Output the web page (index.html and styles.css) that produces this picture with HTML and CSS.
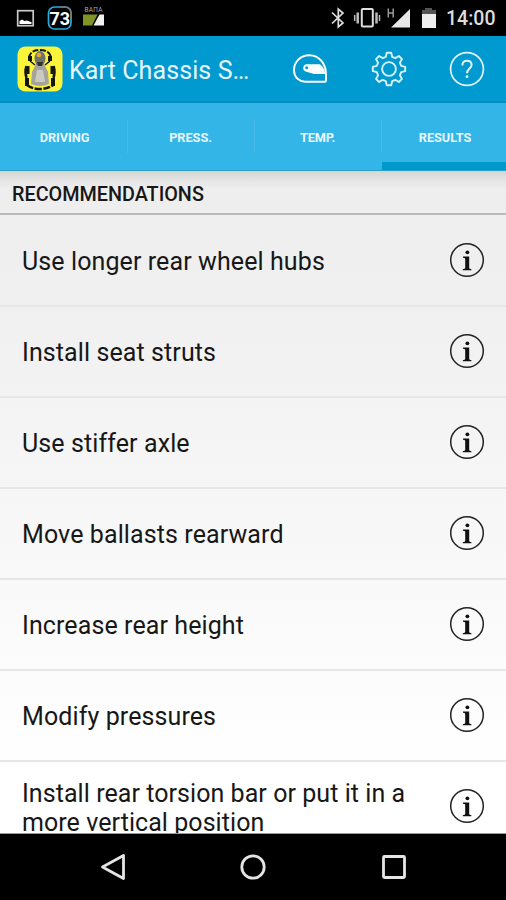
FILE: index.html
```html
<!DOCTYPE html>
<html lang="en">
<head>
<meta charset="utf-8">
<title>Kart Chassis Setup</title>
<link rel="stylesheet" href="styles.css">
</head>
<body>
<svg class="defs" width="0" height="0">
  <symbol id="info" viewBox="0 0 36 36">
    <circle cx="18" cy="18" r="16.3" fill="none" stroke="#222" stroke-width="1.5"/>
    <circle cx="18.4" cy="10.300" r="1.900" fill="#111"/>
    <path d="M14 14.600h6.200V26q0 1 2.200 1.200v1h-8.600v-1q2.400-.2 2.400-1.200V17q0-1.200-2.200-1.300z" fill="#111"/>
  </symbol>
</svg>
<div class="screen">
  <header class="status">
    <svg class="notifications" width="120" height="36" viewBox="0 0 120 36">
      <rect x="17.700" y="10.700" width="15.500" height="15" fill="none" stroke="#c9c9c9" stroke-width="1.700"/>
      <path d="M19.500 24v-3l2.500-1.500 2.500 1.500 2.500-.5 2.500 1 2 .5V24z" fill="#fff"/>
      <rect x="48.500" y="7" width="22.500" height="22" rx="6" fill="none" stroke="#28a9df" stroke-width="1.700"/>
      <path d="M60 7h5q6 0 6 6v6" fill="none" stroke="#777" stroke-width="1.700"/>
      <text class="count" x="59.800" y="24.500" text-anchor="middle">73</text>
      <text class="bapa" x="93.600" y="12.300" text-anchor="middle">BAПA</text>
      <path d="M83 14.500h14.500L92 25.500h-9z" fill="#7f9425"/>
      <path d="M99.500 14.500h4.500v11H93.500z" fill="#f2f2f2"/>
    </svg>
    <div class="system">
      <svg width="112" height="36" viewBox="328 0 112 36">
        <path d="M332 12.500l11 10.500-4.700 4V9l4.700 4-11 10.500" fill="none" stroke="#ddd" stroke-width="1.700"/>
        <rect x="361.800" y="9" width="11" height="17.500" rx="1" fill="none" stroke="#ddd" stroke-width="2"/>
        <path d="M357.700 12.500v11M376.500 12.500v11" stroke="#bbb" stroke-width="2.500"/>
        <path d="M354.700 15v6M379.500 15v6" stroke="#bbb" stroke-width="1.500"/>
        <path d="M388.300 8.500v9M393.200 8.500v9M388.300 13h5" stroke="#999" stroke-width="1.500" fill="none"/>
        <path d="M410 9v18.500h-19z" fill="#e8e8e8"/>
        <path d="M425 8h7v2h4v4h-14v-4h3z" fill="#555"/>
        <path d="M422 14h14v14h-14z" fill="#eee"/>
      </svg>
      <span class="clock">14:00</span>
    </div>
  </header>
  <div class="appbar">
    <svg class="logo" width="46" height="46" viewBox="0 0 46 46">
      <rect x=".5" y=".5" width="45" height="45" rx="8" fill="#fbf43a"/>
      <g fill="none" stroke="#161610">
        <path d="M12 12q1-8 11-8t11 8" stroke-width="2" stroke-dasharray="6 1.500"/>
        <path d="M13 10v5M33 10v5" stroke-width="4"/>
        <path d="M13 15l5 4M33 15l-5 4" stroke-width="1.500"/>
        <path d="M9.500 20q-2 6 0 12M36.500 20q2 6 0 12" stroke-width="2.500"/>
        <path d="M11 20v8M35 20v8" stroke-width="3"/>
        <path d="M10 32v8M36 32v8" stroke-width="4"/>
        <path d="M10 39q5 4 13 4t13-4" stroke-width="2.500" stroke-dasharray="7 1.500"/>
      </g>
      <path d="M19 18h8l4 8 1 12q-9 4-18 0l1-12z" fill="#a5a49c"/>
      <path d="M20 24h6l2 12H18z" fill="#cccbc3"/>
      <ellipse cx="23" cy="12.500" rx="5.500" ry="7.500" fill="#71716e"/>
      <path d="M20 16h6l-1 4h-4z" fill="#333"/>
      <circle cx="22" cy="9" r="2.300" fill="#e1ad29"/>
    </svg>
    <h1>Kart Chassis S…</h1>
    <div class="actions">
      <svg width="36" height="36" viewBox="-18 -18 36 36">
        <path d="M16 11.500V5.500C16-5 9.500-13.700-.8-13.700-9.500-13.700-16-7-16 1-16 9-10 12.700-5 12.700H14.700q1.300 0 1.300-1.200z" fill="none" stroke="#fff" stroke-width="2"/>
        <path d="M-3.300-4.700H10Q14.600-1 15.300 5H4L-4.500 2.400a3.700 3.700 0 0 1 1.200-7.100z" fill="#fff"/>
        <circle cx="-3.300" cy="-1.200" r="1.500" fill="#0099d0"/>
      </svg>
      <svg width="36" height="36" viewBox="-18 -18 36 36" fill="none" stroke="#d8f2fc" stroke-width="1.900" stroke-linejoin="round">
        <path d="M-2.200-16.200L2.200-16.200 3.200-12.200 6.360-10.890 9.900-13.010 13.010-9.900 10.890-6.360 12.200-3.200 16.200-2.200 16.200 2.200 12.200 3.200 10.890 6.360 13.010 9.900 9.900 13.010 6.360 10.890 3.200 12.200 2.200 16.200-2.200 16.200-3.200 12.200-6.360 10.890-9.900 13.010-13.010 9.900-10.890 6.360-12.200 3.200-16.200 2.200-16.200-2.200-12.200-3.200-10.890-6.360-13.010-9.900-9.900-13.010-6.360-10.890-3.200-12.200z"/>
        <circle r="6.900"/>
      </svg>
      <svg width="36" height="36" viewBox="-18 -18 36 36" fill="none" stroke="#e2f5fc" stroke-width="1.700">
        <circle r="16.400"/>
        <path d="M-4.600-3.500C-4.600-6.500-2.800-8.200 0-8.200S4.600-6.500 4.600-3.900C4.600-.8 0 0 0 4.300" stroke-width="2"/>
        <circle cy="7.700" r="1.400" fill="#e2f5fc" stroke="none"/>
      </svg>
    </div>
  </div>
  <nav class="tabs">
    <div class="tab"><span>DRIVING</span></div>
    <div class="tab"><span>PRESS.</span></div>
    <div class="tab"><span>TEMP.</span></div>
    <div class="tab active"><span>RESULTS</span></div>
  </nav>
  <main>
    <h2><span>RECOMMENDATIONS</span></h2>
    <ul>
      <li><span>Use longer rear wheel hubs</span><svg class="info"><use href="#info"/></svg></li>
      <li><span>Install seat struts</span><svg class="info"><use href="#info"/></svg></li>
      <li><span>Use stiffer axle</span><svg class="info"><use href="#info"/></svg></li>
      <li><span>Move ballasts rearward</span><svg class="info"><use href="#info"/></svg></li>
      <li><span>Increase rear height</span><svg class="info"><use href="#info"/></svg></li>
      <li><span>Modify pressures</span><svg class="info"><use href="#info"/></svg></li>
      <li><span>Install rear torsion bar or put it in a<br>more vertical position</span><svg class="info"><use href="#info"/></svg></li>
    </ul>
  </main>
  <footer class="navbar">
    <svg width="30" height="30" viewBox="-15 -15 30 30"><path d="M-10.500 0L10.500-11.500v23z"/></svg>
    <svg width="30" height="30" viewBox="-15 -15 30 30"><circle r="11.200"/></svg>
    <svg width="30" height="30" viewBox="-15 -15 30 30"><rect x="-10.500" y="-10.500" width="21" height="21" rx="1"/></svg>
  </footer>
</div>
</body>
</html>
```
FILE: styles.css
```css
* { box-sizing: border-box; }
body { margin: 0; font-family: Roboto, sans-serif; }
svg { display: block; flex: none; }
.defs { position: absolute; }
.screen {
  width: 506px;
  height: 900px;
  display: flex;
  flex-direction: column;
  overflow: hidden;
  background: #000;
}
.status {
  height: 36px;
  flex: none;
  display: flex;
  justify-content: space-between;
}
.count { font: 700 18px Roboto, sans-serif; fill: #fff; }
.bapa { font: 6.5px Roboto, sans-serif; fill: #aaa; letter-spacing: .3px; }
.system { display: flex; align-items: center; width: 178px; }
.clock {
  margin-left: 6px;
  padding-top: 2px;
  color: #ddd;
  font-size: 19.500px;
  font-weight: 500;
  line-height: 24px;
  white-space: nowrap;
}
.appbar {
  height: 67px;
  flex: none;
  display: flex;
  align-items: center;
  padding: 1px 21px 0 17px;
  background: #0099d0;
  border-bottom: 2px solid #0089bd;
}
h1 {
  margin: 4px 0 0 6px;
  color: #e6f6fc;
  font-size: 25px;
  font-weight: 400;
  line-height: 30px;
  letter-spacing: .1px;
  white-space: nowrap;
}
.actions { display: flex; gap: 42.500px; margin-left: auto; }
.tabs {
  height: 68px;
  flex: none;
  display: grid;
  grid-template-columns: 128px 127px 127px 124px;
  background: #33b5e7;
  border-bottom: 1px solid #2b9dcb;
}
.tab {
  display: flex;
  align-items: center;
  justify-content: center;
  padding: 1px 2px 0 0;
  color: #e9f8fe;
  font-size: 12.700px;
  font-weight: 700;
  background: linear-gradient(#48bae8, #48bae8) right 17px / 1px 33px no-repeat;
}
.tab:first-child { padding: 1px 0 0 1px; }
.tab:nth-child(3) { letter-spacing: -.1px; }
.tab.active { background: #33b5e7; border-bottom: 8px solid #0099cc; padding: 9px 0 0 2px; }
main {
  height: 663px;
  flex: none;
  overflow: hidden;
  background: linear-gradient(#eee 0, #f0f0f0 130px, #fff 600px);
  border-bottom: 1px solid #999;
}
h2 {
  height: 44px;
  margin: 0;
  padding: 8px 12px 0;
  color: #171717;
  font-size: 19.800px;
  font-weight: 500;
  line-height: 32px;
  border-bottom: 2px solid #b9bab9;
  background: linear-gradient(#d5d5d4, #e5e5e5 10px, #eee 18px);
}
ul { list-style: none; margin: 0; padding: 1px 0 0; }
li {
  height: 91px;
  display: flex;
  align-items: center;
  justify-content: space-between;
  padding: 0 21px 0 22px;
  color: #171717;
  font-size: 25px;
  line-height: 29px;
  letter-spacing: .1px;
  border-bottom: 2px solid #e6e6e6;
}
li span { white-space: nowrap; padding-top: 1px; }
li:last-child span { padding-top: 3px; letter-spacing: .06px; }
.info { width: 36px; height: 36px; margin-top: -2px; }
.navbar {
  flex: 1;
  display: grid;
  grid-template-columns: repeat(3, 30px);
  justify-content: center;
  column-gap: 110.500px;
  align-items: center;
  background: #000;
}
.navbar svg { fill: none; stroke: #e5e5e5; stroke-width: 2.800; stroke-linejoin: round; }
```
